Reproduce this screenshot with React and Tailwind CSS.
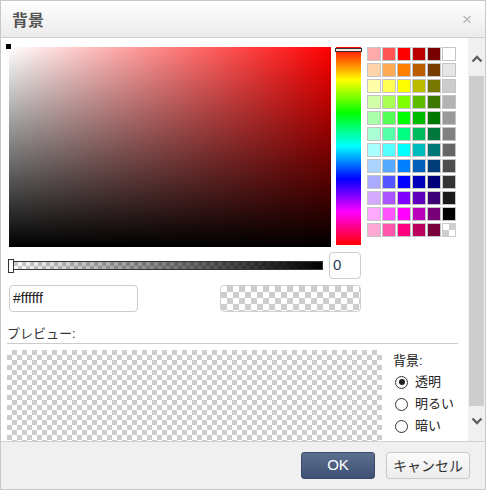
import React from "react";

const palette = [
  ["#ffaaaa", "#ff5555", "#ff0000", "#bb0000", "#770000", "#ffffff"],
  ["#ffd4aa", "#ffaa55", "#ff8000", "#bb5e00", "#773c00", "#e6e6e6"],
  ["#ffffaa", "#ffff55", "#ffff00", "#bbbb00", "#777700", "#cccccc"],
  ["#d4ffaa", "#aaff55", "#80ff00", "#5ebb00", "#3c7700", "#b3b3b3"],
  ["#aaffaa", "#55ff55", "#00ff00", "#00bb00", "#007700", "#999999"],
  ["#aaffd4", "#55ffaa", "#00ff80", "#00bb5e", "#00773c", "#808080"],
  ["#aaffff", "#55ffff", "#00ffff", "#00bbbb", "#007777", "#666666"],
  ["#aad4ff", "#55aaff", "#0080ff", "#005ebb", "#003c77", "#4d4d4d"],
  ["#aaaaff", "#5555ff", "#0000ff", "#0000bb", "#000077", "#333333"],
  ["#d4aaff", "#aa55ff", "#8000ff", "#5e00bb", "#3c0077", "#1a1a1a"],
  ["#ffaaff", "#ff55ff", "#ff00ff", "#bb00bb", "#770077", "#000000"],
  ["#ffaad4", "#ff55aa", "#ff0080", "#bb005e", "#77003c", null],
];

const checker =
  "bg-[conic-gradient(#cdcdcd_25%,#ffffff_0_50%,#cdcdcd_0_75%,#ffffff_0)]";

const Chevron = ({ down }) => (
  <svg width="12" height="8" viewBox="0 0 12 8">
    <path
      d={down ? "M1.5 1.5 L6 6 L10.5 1.5" : "M1.5 6.5 L6 2 L10.5 6.5"}
      fill="none"
      stroke="#606060"
      strokeWidth="2.4"
    />
  </svg>
);

const Radio = ({ checked, label }) => (
  <div className="h-[22px] flex items-center">
    <div className="ml-[2px] w-[13px] h-[13px] rounded-full border border-[#333] bg-white flex items-center justify-center">
      {checked && <div className="w-[6px] h-[6px] rounded-full bg-[#222]"></div>}
    </div>
    <span className="ml-[7px] text-[13px] text-[#222]">{label}</span>
  </div>
);

export default function App() {
  return (
    <div className="w-[486px] h-[490px] border border-[#c8c8c8] bg-white flex flex-col overflow-hidden font-['Liberation_Sans','Noto_Sans_CJK_JP',sans-serif] text-[#333]">
      {/* title */}
      <div className="h-[37px] shrink-0 border-b border-[#cfcfcf] bg-[linear-gradient(to_bottom,#ffffff,#ebebeb)] flex items-center justify-between pl-[11px] pr-[13px]">
        <span className="text-[16px] font-bold text-[#555] font-['Noto_Sans_CJK_JP',sans-serif]">
          背景
        </span>
        <span className="text-[17px] text-[#b5b5b5] leading-none">×</span>
      </div>

      <div className="flex flex-1 min-h-0">
        <div className="flex-1 overflow-hidden pl-[8px] pt-[9px]">
          {/* picker row */}
          <div className="flex items-start">
            <div className="relative w-[322px] h-[200px] bg-[#ff0000]">
              <div className="absolute inset-0 bg-[linear-gradient(to_right,#ffffff,rgba(255,255,255,0))]"></div>
              <div className="absolute inset-0 bg-[linear-gradient(to_top,#000000,rgba(0,0,0,0))]"></div>
              <div className="absolute -left-[3px] -top-[3px] w-[5px] h-[5px] bg-black"></div>
            </div>
            <div className="relative ml-[5px] w-[25px] h-[198px] bg-[linear-gradient(to_bottom,#ff0000,#ffff00,#00ff00,#00ffff,#0000ff,#ff00ff,#ff0000)]">
              <div className="absolute -left-[1px] -right-[1px] top-[1px] h-[4px] border border-[#333] bg-[#fbe4e4]"></div>
            </div>
            <div className="ml-[6px] grid grid-cols-[repeat(6,14px)] gap-x-[1px] gap-y-[2px]">
              {palette.flat().map((c, i) =>
                c ? (
                  <div
                    key={i}
                    className="w-[14px] h-[14px] border border-[#c4c4c4]"
                    style={{ backgroundColor: c }}
                  ></div>
                ) : (
                  <div
                    key={i}
                    className={`w-[14px] h-[14px] border border-[#cdcdcd] ${checker} bg-size-[12px_12px]`}
                  ></div>
                )
              )}
            </div>
          </div>

          {/* alpha row */}
          <div className="mt-[5px] flex items-center h-[27px]">
            <div className="relative w-[314px] h-[14px] flex items-center">
              <div className={`w-full h-[9px] border border-[#333] ${checker} bg-size-[8px_8px]`}>
                <div className="w-full h-full bg-[linear-gradient(to_right,rgba(0,0,0,0),#000000)]"></div>
              </div>
              <div className="absolute -left-[1px] top-0 w-[6px] h-[14px] border border-[#333] bg-white"></div>
            </div>
            <div className="ml-[6px] w-[32px] h-[27px] rounded-[4px] border border-[#cccccc] bg-white flex items-center pl-[3px] text-[15px] text-[#2b3a55]">
              0
            </div>
          </div>

          {/* hex row */}
          <div className="mt-[6px] flex">
            <div className="w-[129px] h-[27px] rounded-[4px] border border-[#cccccc] bg-white flex items-center pl-[3px] text-[14px] text-[#222]">
              #ffffff
            </div>
            <div className={`ml-[82px] w-[141px] h-[27px] rounded-[4px] border border-[#d0d0d0] ${checker} bg-size-[12px_12px]`}></div>
          </div>

          {/* preview */}
          <div className="-ml-[2px] mt-[13px] w-[451px]">
            <div className="h-[19px] leading-[18px] border-b border-[#cccccc] text-[13px] text-[#333]">
              プレビュー:
            </div>
            <div className="mt-[6px] flex">
              <div className={`w-[375px] h-[120px] ${checker} bg-size-[10px_10px]`}></div>
              <div className="ml-[11px] pt-[2px]">
                <div className="text-[13px] leading-[18px] text-[#222]">背景:</div>
                <div className="pt-[1px]">
                  <Radio checked label="透明" />
                  <Radio label="明るい" />
                  <Radio label="暗い" />
                </div>
              </div>
            </div>
          </div>
        </div>

        {/* scrollbar */}
        <div className="w-[17px] shrink-0 bg-[#f0f0f0] flex flex-col">
          <div className="h-[38px] flex items-center justify-center pt-[4px]">
            <Chevron />
          </div>
          <div className="mx-[1px] h-[330px] bg-[#cdcdcd]"></div>
          <div className="flex-1"></div>
          <div className="h-[35px] flex items-center justify-center pb-[6px]">
            <Chevron down />
          </div>
        </div>
      </div>

      {/* footer */}
      <div className="h-[48px] shrink-0 border-t border-[#cfcfcf] bg-[#f0f0f0] flex items-center justify-end gap-[11px] pr-[15px]">
        <button className="w-[74px] h-[27px] rounded-[3px] border border-[#3a4a66] bg-[linear-gradient(to_bottom,#5d6f8f,#3e5174)] text-white text-[15px]">
          OK
        </button>
        <button className="w-[84px] h-[27px] rounded-[3px] border border-[#c8c8c8] bg-[linear-gradient(to_bottom,#fbfbfb,#ececec)] text-[14px] text-[#333] font-['Noto_Sans_CJK_JP',sans-serif]">
          キャンセル
        </button>
      </div>
    </div>
  );
}
